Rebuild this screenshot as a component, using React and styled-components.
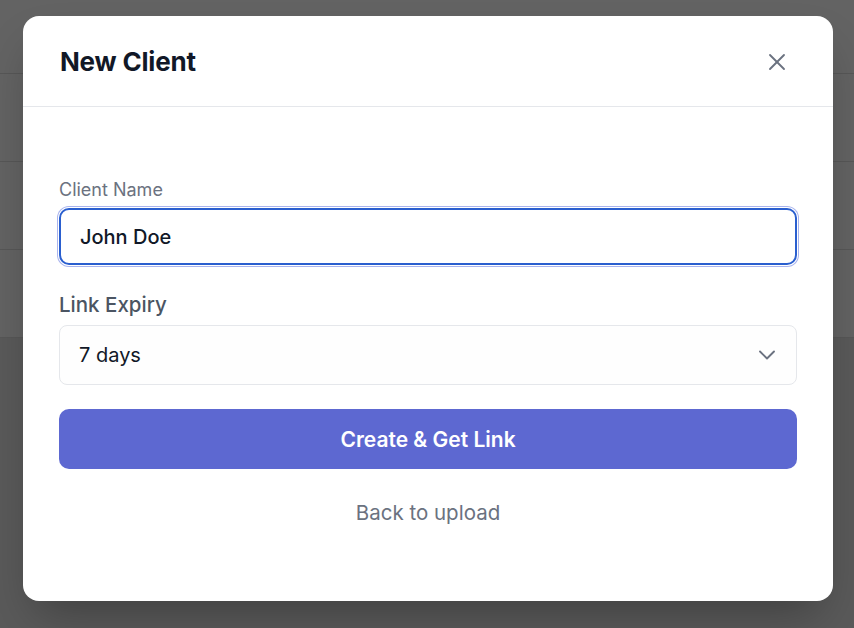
import styled, { createGlobalStyle } from 'styled-components';
import { X, ChevronDown } from 'lucide-react';

const GlobalStyle = createGlobalStyle`
  * {
    box-sizing: border-box;
  }
  html, body {
    margin: 0;
    padding: 0;
    height: 100%;
  }
  body {
    font-family: Inter, "Noto Sans", "Liberation Sans", sans-serif;
    -webkit-font-smoothing: antialiased;
  }
`;

const Page = styled.div`
  position: relative;
  width: 100vw;
  height: 100vh;
  overflow: hidden;
  background: #5a5a5a;
`;

const Rows = styled.div`
  display: flex;
  flex-direction: column;
`;

const Row = styled.div`
  height: 88px;
  background: #636363;
  border-bottom: 1px solid #575757;

  &:first-child {
    height: 74px;
  }
`;

const Overlay = styled.div`
  position: absolute;
  inset: 0;
  display: flex;
  justify-content: center;
  align-items: flex-start;
  padding: 16px 0 0 2px;
`;

const Modal = styled.div`
  width: 810px;
  background: #ffffff;
  border-radius: 16px;
  box-shadow: 0 24px 48px -12px rgba(0, 0, 0, 0.3);
  display: flex;
  flex-direction: column;
`;

const Header = styled.header`
  height: 91px;
  display: flex;
  align-items: center;
  justify-content: space-between;
  padding: 1px 42px 0 37px;
  border-bottom: 1px solid #e5e7eb;
`;

const Title = styled.h2`
  margin: 0;
  font-size: 26px;
  font-weight: 700;
  color: #111827;
  letter-spacing: -0.2px;
`;

const CloseButton = styled.button`
  border: none;
  background: none;
  padding: 0;
  display: flex;
  color: #6b7280;
  cursor: pointer;
`;

const Body = styled.div`
  display: flex;
  flex-direction: column;
  padding: 71px 36px 74px;
`;

const Label = styled.label`
  font-size: ${p => (p.large ? '20.5px' : '18px')};
  line-height: ${p => (p.large ? '28px' : '24px')};
  font-weight: ${p => (p.large ? 500 : 400)};
  color: ${p => (p.large ? '#4b5563' : '#6b7280')};
  margin-bottom: 6px;
`;

const Input = styled.input`
  height: 57px;
  width: 100%;
  border: 2px solid #2a5fcf;
  border-radius: 10px;
  padding: 0 19px;
  font-family: inherit;
  font-size: 20px;
  font-weight: 500;
  color: #111827;
  outline: none;
  box-shadow: 0 0 0 1px #ffffff, 0 0 0 2px #a9b4ee;
  margin-bottom: 26px;
`;

const Select = styled.div`
  height: 60px;
  display: flex;
  align-items: center;
  justify-content: space-between;
  padding: 0 15px 0 19px;
  border: 1px solid #e5e7eb;
  border-radius: 8px;
  background: #fefefe;
  font-size: 20px;
  color: #111827;
  margin-bottom: 24px;
`;

const PrimaryButton = styled.button`
  height: 60px;
  border: none;
  border-radius: 10px;
  background: #5d68d1;
  color: #ffffff;
  font-family: inherit;
  font-size: 21px;
  font-weight: 600;
  cursor: pointer;
  margin-bottom: 30px;
`;

const LinkButton = styled.button`
  border: none;
  background: none;
  padding: 0;
  font-family: inherit;
  font-size: 20.5px;
  line-height: 28px;
  color: #6b7280;
  cursor: pointer;
`;

const App = () => {
  return (
    <>
      <GlobalStyle />
      <Page>
        <Rows>
          <Row />
          <Row />
          <Row />
          <Row />
        </Rows>
        <Overlay>
          <Modal>
            <Header>
              <Title>New Client</Title>
              <CloseButton aria-label="Close">
                <X size={28} strokeWidth={1.6} />
              </CloseButton>
            </Header>
            <Body>
              <Label htmlFor="client-name">Client Name</Label>
              <Input id="client-name" defaultValue="John Doe" />
              <Label large>Link Expiry</Label>
              <Select>
                <span>7 days</span>
                <ChevronDown size={28} strokeWidth={1.6} color="#6b7280" />
              </Select>
              <PrimaryButton>Create &amp; Get Link</PrimaryButton>
              <LinkButton>Back to upload</LinkButton>
            </Body>
          </Modal>
        </Overlay>
      </Page>
    </>
  );
};

export default App;
